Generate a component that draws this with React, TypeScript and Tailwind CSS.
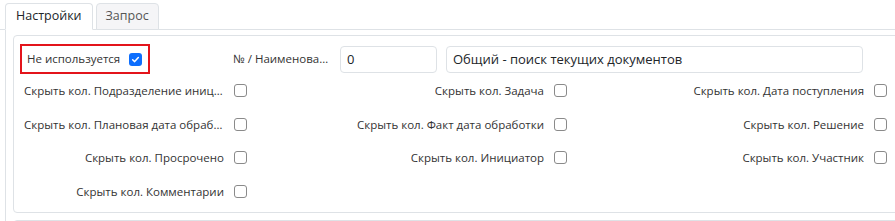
import { useState } from "react";

type Field = { label: string; checked?: boolean };

const columns: Field[][] = [
  [
    { label: "Скрыть кол. Подразделение инициатора" },
    { label: "Скрыть кол. Плановая дата обработки" },
    { label: "Скрыть кол. Просрочено" },
    { label: "Скрыть кол. Комментарии" },
  ],
  [
    { label: "Скрыть кол. Задача" },
    { label: "Скрыть кол. Факт дата обработки" },
    { label: "Скрыть кол. Инициатор" },
  ],
  [
    { label: "Скрыть кол. Дата поступления" },
    { label: "Скрыть кол. Решение" },
    { label: "Скрыть кол. Участник" },
  ],
];

function Check({ checked = false }: { checked?: boolean }) {
  if (checked) {
    return (
      <span className="flex h-[13px] w-[13px] shrink-0 items-center justify-center rounded-[3px] bg-[#0d6efd]">
        <svg viewBox="0 0 12 12" className="h-[9px] w-[9px]" fill="none">
          <path d="M2.2 6.3 4.9 8.8 9.8 3.4" stroke="white" strokeWidth="2" strokeLinecap="round" strokeLinejoin="round" />
        </svg>
      </span>
    );
  }
  return <span className="h-[13px] w-[13px] shrink-0 rounded-[3px] border border-[#8a8a8a] bg-white" />;
}

function CheckRow({ label }: { label: string }) {
  return (
    <div className="flex w-full items-center justify-end gap-[10px] pr-[1px]">
      <span className="max-w-[200px] truncate text-right">{label}</span>
      <Check />
    </div>
  );
}

export default function App() {
  const [tab, setTab] = useState("settings");
  const rows = Math.max(...columns.map((c) => c.length));

  return (
    <div className="h-[221px] w-[895px] overflow-hidden bg-white font-['Open_Sans',sans-serif] text-[#333]">
      <div className="flex h-[30px] items-end gap-[3px] border-b border-[#dee2e6] pl-[5px]">
        <button
          onClick={() => setTab("settings")}
          className={`-mb-px h-[27px] rounded-t-[4px] border border-[#dee2e6] px-[10px] text-[12.5px] ${
            tab === "settings" ? "border-b-white bg-white text-[#212529]" : "bg-[#f5f5f7] text-[#555]"
          }`}
        >
          Настройки
        </button>
        <button
          onClick={() => setTab("query")}
          className={`-mb-px h-[27px] rounded-t-[4px] border border-[#dee2e6] px-[9px] text-[12.5px] ${
            tab === "query" ? "border-b-white bg-white text-[#212529]" : "bg-[#f5f5f7] text-[#555]"
          }`}
        >
          Запрос
        </button>
      </div>

      <div className="ml-[5px] h-[191px] border-l border-[#dee2e6] pl-[7px] pt-[5px]">
        <div className="h-[178px] w-[960px] rounded-[4px] border border-[#dee2e6] pl-[6px] pt-[8px] text-[11.5px]">
          <div className="flex h-[30px] items-center">
            <div className="flex h-[30px] w-[130px] items-center justify-between border-2 border-[#e3141b] pl-[5px] pr-[6px]">
              <span>Не используется</span>
              <Check checked />
            </div>
            <span className="ml-[83px] w-[98px] truncate text-right">№ / Наименование</span>
            <input
              defaultValue="0"
              className="ml-[9px] h-[27px] w-[97px] rounded-[4px] border border-[#dee2e6] px-[6px] text-[13px] text-[#212529] outline-none"
            />
            <input
              defaultValue="Общий - поиск текущих документов"
              className="ml-[9px] h-[27px] w-[417px] rounded-[4px] border border-[#dee2e6] px-[6px] text-[13px] text-[#212529] outline-none"
            />
          </div>

          <div className="grid auto-rows-[33.5px] grid-cols-[228px_320px_320px] items-center">
            {Array.from({ length: rows }).flatMap((_, r) =>
              columns.map((col, c) =>
                col[r] ? <CheckRow key={`${r}-${c}`} label={col[r].label} /> : <div key={`${r}-${c}`} />
              )
            )}
          </div>
        </div>
        <div className="mt-[7px] h-10 w-[960px] rounded-[4px] border border-[#dee2e6]" />
      </div>
    </div>
  );
}
